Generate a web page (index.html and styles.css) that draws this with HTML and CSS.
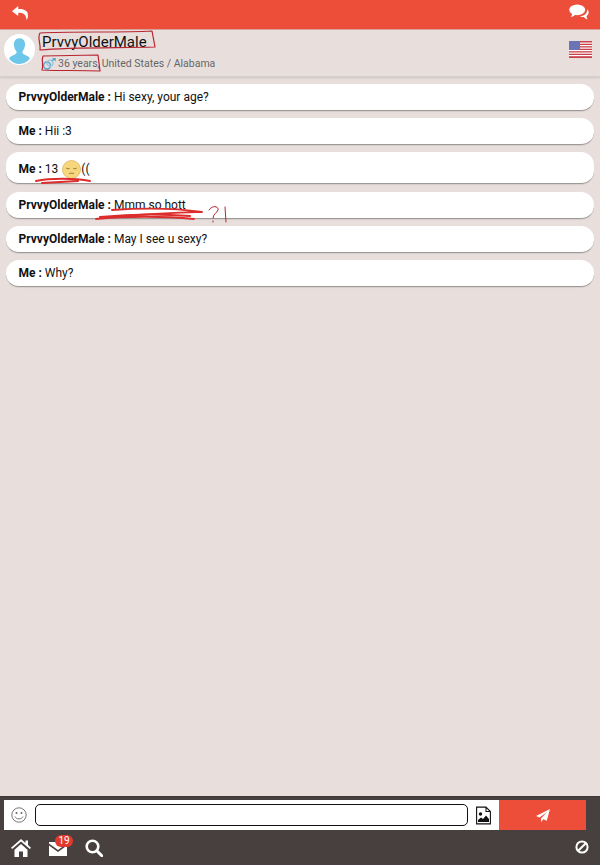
FILE: index.html
```html
<!DOCTYPE html>
<html lang="en">
<head>
<meta charset="utf-8">
<title>Chat</title>
<link rel="stylesheet" href="styles.css">
</head>
<body>
<div class="app">
  <div class="topbar">
    <svg class="ico-back" viewBox="0 0 20 18"><path d="M8 1 1 7l7 5.500V9c4-.6 7 .6 8.500 4 .5 1.200.8 2.500 1 4 1.200-2 1.800-4 1.300-6.200C19 6.500 14 4.400 8 4.600Z" fill="#fff"/></svg>
    <svg class="ico-chat" viewBox="0 0 22 18"><path d="M20 5.500c1.500 1.300 2 3 1.500 4.600-.4 1.200-1.300 2.200-2.300 2.900.2 1.500.8 2.700 1.300 3.600-1.700-.4-3.200-1.300-4.300-2.600-1.500.2-3-.1-4.300-.7 4.200-.1 8.500-3 8.100-7.800Z" fill="#fff"/><ellipse cx="9" cy="6" rx="8.800" ry="5.900" fill="#fff"/><path d="M3.500 9.500c0 2-.8 3.600-1.800 4.800 2.200-.4 4.200-1.600 5.300-3Z" fill="#fff"/></svg>
  </div>
  <header class="profile">
    <div class="avatar">
      <svg viewBox="0 0 30 30"><path d="M15 4c3.700 0 5.600 3 5.400 6.500-.2 2.800-1.300 5-2.400 6.200-.5 1.500 0 2.500 2 3.400 2 .9 4.500 1.700 5 3.900A14 14 0 0 1 15 29a14 14 0 0 1-10-4.900c.5-2.200 3-3 5-3.900 2-.9 2.500-1.900 2-3.400-1.100-1.200-2.200-3.400-2.400-6.200C9.400 7 11.300 4 15 4Z" fill="#6ec6ea"/></svg>
    </div>
    <div class="who">
      <div class="name">PrvvyOlderMale</div>
      <div class="meta">
        <svg class="ico-gender" viewBox="0 0 14 12"><circle cx="5" cy="7.500" r="3.400" fill="none" stroke="#5aa7d0" stroke-width="1.500"/><circle cx="8" cy="5" r="3" fill="none" stroke="#8fc4e0" stroke-width="1.200"/><path d="M9.500 3 13 .7M10.500.6H13.200V3.200" fill="none" stroke="#5aa7d0" stroke-width="1.200"/></svg>
        <span>36 years,</span> <span>United States / Alabama</span>
      </div>
    </div>
    <svg class="flag" viewBox="0 0 23 17">
      <rect width="23" height="17" fill="#fff"/>
      <g fill="#c8404a"><rect width="23" height="1.500" y="0"/><rect width="23" height="1.300" y="2.700"/><rect width="23" height="1.300" y="5.200"/><rect width="23" height="1.300" y="7.700"/><rect width="23" height="1.300" y="10.200"/><rect width="23" height="1.300" y="12.700"/><rect width="23" height="1.800" y="15.200"/></g>
      <rect width="11" height="9" fill="#6b74b4"/>
    </svg>
  </header>
  <main class="thread">
    <div class="msg"><b>PrvvyOlderMale :</b> Hi sexy, your age?</div>
    <div class="msg"><b>Me :</b> Hii :3</div>
    <div class="msg msg-tall"><b>Me :</b> 13 <svg class="emoji" viewBox="0 0 20 20"><circle cx="10" cy="10" r="9.500" fill="#f6d77e" stroke="#dcb45e" stroke-width=".8"/><path d="M4.500 8.500c1 .9 2.500.9 3.500.3M12 8.800c1 .6 2.500.6 3.500-.3M7.500 14.500c1.500-.8 3.500-.8 5 0" fill="none" stroke="#8c6a30" stroke-width="1"/></svg>((</div>
    <div class="msg"><b>PrvvyOlderMale :</b> Mmm so hott</div>
    <div class="msg"><b>PrvvyOlderMale :</b> May I see u sexy?</div>
    <div class="msg"><b>Me :</b> Why?</div>
  </main>
  <div class="composer">
    <div class="inputbox">
      <svg class="ico-smile" viewBox="0 0 16 16"><circle cx="8" cy="8" r="7.200" fill="none" stroke="#666" stroke-width=".9"/><circle cx="5.500" cy="6" r="1" fill="#666"/><circle cx="10.500" cy="6" r="1" fill="#666"/><path d="M4 9.500c1 3.200 7 3.200 8 0" fill="none" stroke="#666" stroke-width=".9"/></svg>
      <div class="field"></div>
      <svg class="ico-image" viewBox="0 0 15 18"><path d="M.6.600h9.400l4.400 4.400v12.400H.6ZM10 .6V5h4.400" fill="#fff" stroke="#111" stroke-width="1.100"/><circle cx="4.500" cy="7.500" r="1.700" fill="#111"/><path d="M2 15.500v-2l3-2.500 2 1.500 3-3.500 3 3.500v3Z" fill="#111"/></svg>
    </div>
    <button class="send" type="button" aria-label="Send"><svg viewBox="0 0 14 13"><path d="M14 0 0 7l3.500 1.500L11 3 5 9.500V13l2.300-2.800 3.500 1.500Z" fill="#fff"/></svg></button>
  </div>
  <nav class="nav">
    <div class="nav-left">
      <svg class="ico-home" viewBox="0 0 20 18"><path d="M10 0 0 8.800l1.200 1.300L10 2.500l8.800 7.600L20 8.800l-3-2.700V1.500h-2.500v2.400ZM3.500 10.800 10 5l6.500 5.800V18h-4.500v-5.500H8V18H3.500Z" fill="#fff"/></svg>
      <div class="mail">
        <svg viewBox="0 0 18 14"><path d="M0 1.500 9 8l9-6.500V0H0ZM0 3.500V14h18V3.500L9 10Z" fill="#fff"/></svg>
        <span class="badge">19</span>
      </div>
      <svg class="ico-search" viewBox="0 0 18 18"><circle cx="7.500" cy="7.500" r="5.800" fill="none" stroke="#fff" stroke-width="2.600"/><path d="m11.800 11.800 5 5" stroke="#fff" stroke-width="3" stroke-linecap="round"/></svg>
    </div>
    <svg class="ico-block" viewBox="0 0 14 14"><circle cx="7" cy="7" r="5.600" fill="none" stroke="#fff" stroke-width="2"/><path d="M3.200 10.800 10.800 3.200" stroke="#fff" stroke-width="2"/></svg>
  </nav>
  <svg class="scribble" viewBox="0 0 600 865" aria-hidden="true">
    <g fill="none" stroke="#b82430" stroke-linecap="round" stroke-linejoin="round">
      <path d="M40 33C70 31 120 33 152 31L155 47C120 48 70 47 40 50 41 44 37 38 40 33Z" stroke-width="1.200"/>
      <path d="M43 56 98 55 100 71C80 70 60 71 42 70 44 65 41 60 43 56Z" stroke-width="1.200"/>
      <path d="M36 181C50 178 75 178 90 181M42 183 78 181" stroke="#dc2c2c" stroke-width="2"/>
      <path d="M112 210C140 208 175 208 202 212 170 213 130 214 96 219 125 216 165 216 194 219" stroke="#dc2c2c" stroke-width="1.800"/>
      <path d="M100 217C130 214 165 214 190 216" stroke="#dc2c2c" stroke-width="2"/>
      <path d="M209 210C212 205 219 206 218 210 217 213 213 214 213 218M213 221V222M225 207 226 222" stroke-width="1"/>
    </g>
  </svg>
</div>
</body>
</html>
```

FILE: styles.css
```css
* { box-sizing: border-box; }
html, body { margin: 0; height: 100%; }
body { font-family: Roboto, "Liberation Sans", sans-serif; color: #111; background: #e8dfdd; }
.app { position: relative; width: 600px; height: 865px; display: flex; flex-direction: column; overflow: hidden; }
.topbar { flex: 0 0 30px; background: #ec4e3a; display: flex; justify-content: space-between; align-items: flex-start; padding: 4px 11px 0; border-bottom: 1px solid #d8a49c; }
.ico-back { width: 18px; height: 16px; margin-top: 1px; }
.ico-chat { width: 20px; height: 17px; }
.profile { flex: 0 0 47px; display: flex; align-items: flex-start; padding: 4px 8px 0 4px; background: #e8dfdd; border-bottom: 1px solid #d6cecc; box-shadow: 0 1px 2px rgba(0,0,0,.12); }
.avatar { flex: none; width: 31px; height: 31px; border-radius: 50%; background: #fff; overflow: hidden; }
.avatar svg { display: block; width: 31px; height: 31px; }
.who { flex: 1; padding-left: 7px; }
.name { font-size: 15px; line-height: 17px; color: #111; }
.meta { display: flex; align-items: center; gap: 2px; margin-top: 6px; font-size: 10.500px; line-height: 14px; color: #666; }
.ico-gender { width: 14px; height: 12px; }
.flag { width: 23px; height: 17px; margin-top: 7px; }
.thread { flex: 1; display: flex; flex-direction: column; gap: 7px; padding: 7px 6px 0; }
.msg { height: 27px; padding: 0 12.500px; display: flex; align-items: center; white-space: pre; font-size: 12px; background: #fff; border-radius: 13px; border-bottom: 1px solid #9d9997; box-shadow: 0 1px 1px rgba(0,0,0,.08); }
.msg b { font-weight: 700; }
.msg-tall { height: 32px; margin-bottom: 1px; padding-top: 3px; }
.emoji { width: 19px; height: 19px; margin-left: 1px; }
.composer { flex: 0 0 35px; background: #47403e; padding: 3px 14px 0 4px; display: flex; align-items: flex-start; border-top: 1px solid #3c3634; }
.inputbox { flex: 1; height: 30px; background: #fff; display: flex; align-items: center; padding-left: 7px; }
.ico-smile { flex: none; width: 16px; height: 16px; }
.field { flex: 1; height: 22px; background: #fff; border: 1.500px solid #111; border-radius: 5px; margin: 0 8px; }
.ico-image { flex: none; width: 15px; height: 19px; margin-right: 8px; }
.send { flex: 0 0 87px; height: 30px; padding: 0; border: 0; background: #ec4e3a; display: flex; align-items: center; justify-content: center; }
.send svg { width: 14px; height: 13px; }
.nav { flex: 0 0 34px; background: #47403e; display: flex; align-items: center; justify-content: space-between; padding: 0 11px; }
.nav-left { display: flex; align-items: center; gap: 18px; }
.ico-home { width: 20px; height: 18px; }
.mail { position: relative; width: 18px; height: 14px; margin-top: 2px; }
.mail svg { display: block; width: 18px; height: 14px; }
.badge { position: absolute; left: 6px; top: -7px; min-width: 18px; height: 12px; border-radius: 6px; background: #e2392f; color: #fff; font-size: 10px; line-height: 12px; text-align: center; }
.ico-search { width: 18px; height: 18px; }
.ico-block { width: 14px; height: 14px; margin-bottom: 3px; }
.scribble { position: absolute; left: 0; top: 0; width: 600px; height: 865px; pointer-events: none; }
```
